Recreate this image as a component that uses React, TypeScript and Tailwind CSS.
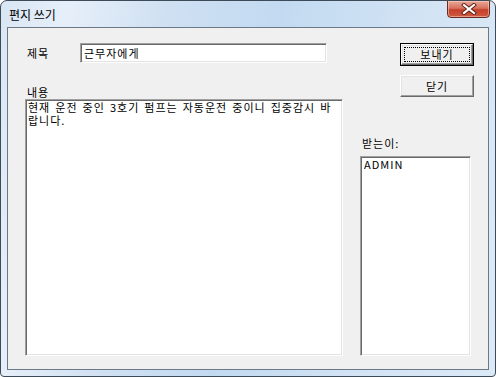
const font = "font-['Noto_Sans_CJK_KR','Noto_Sans',sans-serif]";

function Sunken({ className, children }: { className?: string; children?: React.ReactNode }) {
  return (
    <div
      className={`bg-white border border-t-[#a0a0a0] border-l-[#a0a0a0] border-b-[#ffffff] border-r-[#ffffff] shadow-[inset_1px_1px_0_#696969,inset_-1px_-1px_0_#e3e3e3] ${className ?? ""}`}
    >
      {children}
    </div>
  );
}

function Button({ label, primary }: { label: string; primary?: boolean }) {
  return (
    <div className={`w-[74px] ${primary ? "h-[23px] border border-black" : "h-[22px]"} bg-[#f0f0f0]`}>
      <div className="h-full border border-t-white border-l-white border-b-[#696969] border-r-[#696969] shadow-[inset_-1px_-1px_0_#a0a0a0,inset_1px_1px_0_#e3e3e3] flex items-center justify-center p-[2px]">
        <div
          className={`w-full h-full flex items-center justify-center leading-none ${
            primary ? "border border-dotted border-black" : ""
          }`}
        >
          {label}
        </div>
      </div>
    </div>
  );
}

export default function App() {
  return (
    <div className={`w-[496px] h-[377px] ${font} bg-white`}>
      <div className="w-full h-full rounded-t-[7px] rounded-b-[4px] border border-[#3d4a58] bg-[linear-gradient(100deg,#d9e6f4_0%,#e6eff9_12%,#cfe0f2_30%,#c2daf1_50%,#d2e3f4_75%,#dceaf7_100%)] flex flex-col overflow-hidden">
        <div className="h-[26px] flex items-start justify-between">
          <span className="pl-[8px] pt-[7px] text-[12px] leading-[14px] text-black">편지 쓰기</span>
          <div className="mr-[5px] w-[43px] h-[18px] -mt-px rounded-b-[4px] border border-[#6b2a20] bg-[linear-gradient(180deg,#e9a898_0%,#d7725e_45%,#c4402a_55%,#cf5a40_100%)] shadow-[inset_0_0_0_1px_rgba(255,220,210,0.5)] flex items-center justify-center">
            <svg width="16" height="12" viewBox="0 0 16 12">
              <path d="M3 2 L13 10 M13 2 L3 10" stroke="#5a1a10" strokeWidth="4" strokeLinecap="square" />
              <path d="M3 2 L13 10 M13 2 L3 10" stroke="#ffffff" strokeWidth="2.2" strokeLinecap="square" />
            </svg>
          </div>
        </div>
        <div className="flex-1 mx-[6px] mb-[6px] border border-[#6a7888] bg-[#f0f0f0] flex pl-[17px] pt-[15px] pb-[13px] text-[11px] tracking-[1px] text-black">
          <div className="w-[318px] flex flex-col">
            <div className="h-[20px] flex items-center">
              <span className="w-[55px] pl-[2px] leading-[12px]">제목</span>
              <Sunken className="w-[247px] h-[20px] flex items-center pl-[3px] leading-[12px]">근무자에게</Sunken>
            </div>
            <div className="mt-[23px] h-[12px] leading-[12px] pl-[2px]">내용</div>
            <Sunken className="mt-[1px] flex-1 px-[2px] pt-[1px] [word-spacing:1.6px]">
              <div className="leading-[13px] whitespace-nowrap">현재 운전 중인 3호기 펌프는 자동운전 중이니 집중감시 바</div>
              <div className="leading-[13px]">랍니다.</div>
            </Sunken>
          </div>
          <div className="flex-1 flex flex-col">
            <div className="pl-[57px] flex flex-col gap-[9px]">
              <Button label="보내기" primary />
              <Button label="닫기" />
            </div>
            <div className="mt-[40px] pl-[19px] h-[12px] leading-[12px]">받는이:</div>
            <Sunken className="mt-[7px] ml-[17px] w-[111px] flex-1 pl-[3px] pt-[1px] leading-[12px]">ADMIN</Sunken>
          </div>
        </div>
      </div>
    </div>
  );
}
